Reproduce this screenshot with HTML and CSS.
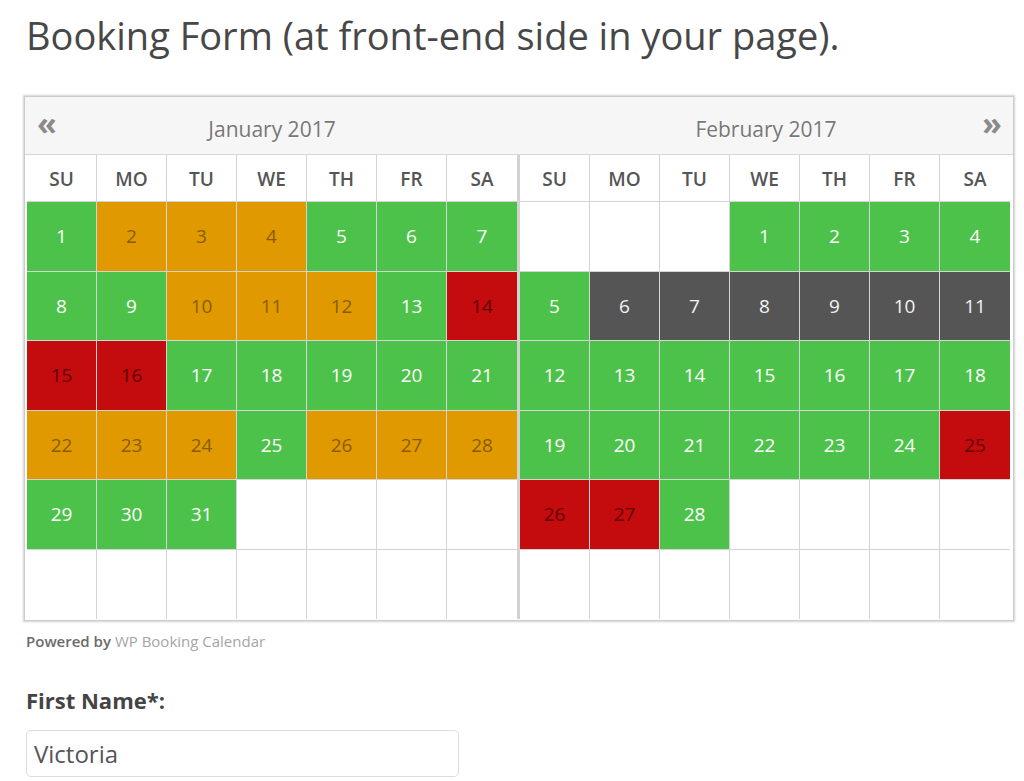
FILE: index.html
```html
<!DOCTYPE html>
<html>
<head>
<meta charset="utf-8">
<link rel="stylesheet" href="styles.css">
</head>
<body>
<div class="page">
  <h1 class="title">Booking Form (at front-end side in your page).</h1>
  <div class="calendar">
    <div class="chead">
      <span class="nav prev">&laquo;</span>
      <span class="mname">January 2017</span>
      <span class="mname">February 2017</span>
      <span class="nav next">&raquo;</span>
    </div>
    <div class="cbody">
      <div class="grid first">
        <div class="dn">SU</div><div class="dn">MO</div><div class="dn">TU</div><div class="dn">WE</div><div class="dn">TH</div><div class="dn">FR</div><div class="dn">SA</div>
        <div class="c g">1</div><div class="c o">2</div><div class="c o">3</div><div class="c o">4</div><div class="c g">5</div><div class="c g">6</div><div class="c g">7</div>
        <div class="c g">8</div><div class="c g">9</div><div class="c o">10</div><div class="c o">11</div><div class="c o">12</div><div class="c g">13</div><div class="c r">14</div>
        <div class="c r">15</div><div class="c r">16</div><div class="c g">17</div><div class="c g">18</div><div class="c g">19</div><div class="c g">20</div><div class="c g">21</div>
        <div class="c o">22</div><div class="c o">23</div><div class="c o">24</div><div class="c g">25</div><div class="c o">26</div><div class="c o">27</div><div class="c o">28</div>
        <div class="c g">29</div><div class="c g">30</div><div class="c g">31</div><div class="c"></div><div class="c"></div><div class="c"></div><div class="c"></div>
        <div class="c last"></div><div class="c last"></div><div class="c last"></div><div class="c last"></div><div class="c last"></div><div class="c last"></div><div class="c last"></div>
      </div>
      <div class="grid">
        <div class="dn">SU</div><div class="dn">MO</div><div class="dn">TU</div><div class="dn">WE</div><div class="dn">TH</div><div class="dn">FR</div><div class="dn">SA</div>
        <div class="c"></div><div class="c"></div><div class="c"></div><div class="c g">1</div><div class="c g">2</div><div class="c g">3</div><div class="c g">4</div>
        <div class="c g">5</div><div class="c d">6</div><div class="c d">7</div><div class="c d">8</div><div class="c d">9</div><div class="c d">10</div><div class="c d">11</div>
        <div class="c g">12</div><div class="c g">13</div><div class="c g">14</div><div class="c g">15</div><div class="c g">16</div><div class="c g">17</div><div class="c g">18</div>
        <div class="c g">19</div><div class="c g">20</div><div class="c g">21</div><div class="c g">22</div><div class="c g">23</div><div class="c g">24</div><div class="c r">25</div>
        <div class="c r">26</div><div class="c r">27</div><div class="c g">28</div><div class="c"></div><div class="c"></div><div class="c"></div><div class="c"></div>
        <div class="c last"></div><div class="c last"></div><div class="c last"></div><div class="c last"></div><div class="c last"></div><div class="c last"></div><div class="c last"></div>
      </div>
    </div>
  </div>
  <div class="powered">Powered by <span class="link">WP Booking Calendar</span></div>
  <div class="field">
    <label class="label">First Name*:</label>
    <div class="input">Victoria</div>
  </div>
</div>
</body>
</html>
```
FILE: styles.css
```css
html, body {
  margin: 0;
  padding: 0;
  background: #fff;
}
.page {
  font-family: "Open Sans", "Noto Sans", sans-serif;
  padding: 0 0 0 24px;
  width: 990px;
}
.title {
  margin: 0;
  padding: 8px 0 0 2px;
  font-size: 38px;
  line-height: 54px;
  font-weight: 400;
  color: #474747;
}
.calendar {
  margin-top: 34px;
  border: 1px solid #cccccc;
  box-shadow: 0 0 2px 1px rgba(0,0,0,0.18);
  background: #fff;
  width: 990px;
  box-sizing: border-box;
  padding: 0 2px 1px 2px;
}
.chead {
  height: 57px;
  margin: 0 -2px;
  background: #f6f6f6;
  position: relative;
  display: flex;
  border-bottom: 1px solid #d6d6d6;
}
.mname {
  flex: 1;
  text-align: center;
  font-size: 21px;
  color: #777;
  text-shadow: 0 1px 0 #fff;
  padding-top: 18px;
}
.nav {
  position: absolute;
  top: 6px;
  font-size: 32px;
  font-weight: 700;
  color: #8a8a8a;
  line-height: 40px;
}
.prev { left: 12px; }
.next { right: 11px; }
.cbody {
  display: flex;
}
.grid {
  display: grid;
  grid-template-columns: repeat(7, 70px);
  grid-template-rows: 47px repeat(6, 69.5px);
}
.grid.first {
  border-right: 3px solid #d2d2d2;
}
.dn, .c {
  display: flex;
  align-items: center;
  justify-content: center;
  border-right: 1px solid #d4d4d4;
  border-bottom: 1px solid #d4d4d4;
  box-sizing: border-box;
}
.dn:nth-child(7n), .c:nth-child(7n) { border-right: none; }
.dn {
  font-size: 19px;
  font-weight: 600;
  color: #555;
  padding-top: 2px;
}
.c {
  font-size: 19px;
  color: #fff;
  background: #fff;
}
.c.last { border-bottom: none; }
.g { background: #4dc24a; color: #fff; }
.o { background: #e09a00; color: #8a5a00; }
.r { background: #c40b0e; color: #620000; }
.d { background: #555555; color: #f2f2f2; }
.powered {
  margin-top: 10px;
  padding-left: 2px;
  font-size: 15px;
  font-weight: 600;
  color: #6b6b6b;
}
.link {
  font-weight: 400;
  color: #a5a5a5;
}
.field {
  margin-top: 34px;
  padding-left: 2px;
}
.label {
  display: block;
  font-size: 22px;
  font-weight: 700;
  color: #444;
  line-height: 30px;
}
.input {
  margin-top: 15px;
  width: 433px;
  height: 47px;
  box-sizing: border-box;
  border: 1px solid #dcdcdc;
  border-radius: 5px;
  padding: 0 7px;
  font-size: 24px;
  line-height: 45px;
  color: #555;
}
```
